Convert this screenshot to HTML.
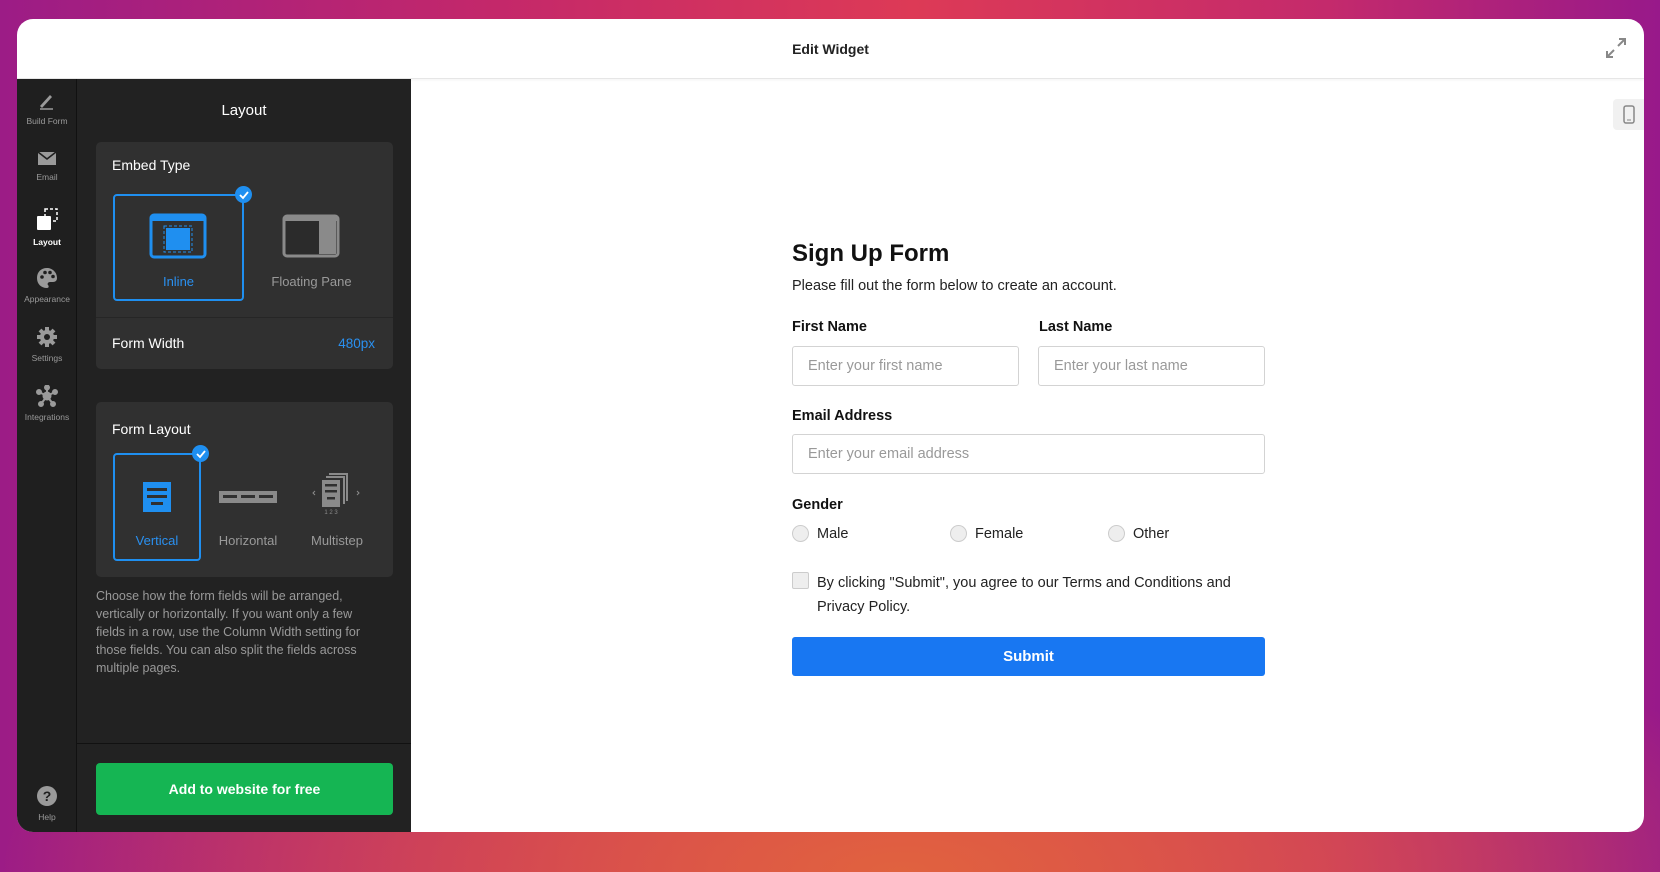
<!DOCTYPE html>
<html><head><meta charset="utf-8"><style>
*{box-sizing:border-box;margin:0;padding:0}
body{width:1660px;height:872px;overflow:hidden;font-family:"Liberation Sans",sans-serif;
background:radial-gradient(ellipse 900px 300px at 900px 872px,#e0623f 0%,rgba(224,98,63,0) 100%),linear-gradient(90deg,#9c1c86 0%,#c4286a 30%,#dd3a56 55%,#c42a6c 80%,#98198a 100%);position:relative}
.win{position:absolute;left:17px;top:19px;width:1627px;height:813px;background:#fff;border-radius:16px;overflow:hidden}
.hdr{position:absolute;left:0;top:0;width:100%;height:60px;border-bottom:1px solid #e6e6e6;box-shadow:0 1px 3px rgba(0,0,0,.05)}
.hdr .t{position:absolute;left:0;right:0;top:22px;text-align:center;font-size:14px;font-weight:bold;color:#222}
.rail{position:absolute;left:0;top:60px;width:60px;height:753px;background:#1f1f1f;border-right:1px solid #111}
.ri{position:absolute;left:0;width:60px;text-align:center;font-size:8.5px;color:#9a9a9a}
.ri svg{display:block;margin:0 auto 5px}
.panel{position:absolute;left:60px;top:60px;width:334px;height:753px;background:#222}
.card{position:absolute;left:19px;width:297px;background:#303030;border-radius:5px}
.ct{position:absolute;left:16px;font-size:14px;color:#fff}
.box{position:absolute}
.sel{border:2px solid #1f8ff0;border-radius:4px}
.lbl{position:absolute;text-align:center;font-size:13px;color:#999;white-space:nowrap}
.ic{position:absolute}
.chk{position:absolute;width:17px;height:17px;border-radius:50%;background:#1f8ff0}
.form{position:absolute;left:775px;top:0;color:#222}
.lab{position:absolute;font-size:14.5px;font-weight:bold;color:#111}
.inp{position:absolute;height:40px;border:1px solid #d3d3d3;border-radius:3px;font-size:14.5px;color:#999;padding:11px 15px}
.rad{position:absolute;width:17px;height:17px;border-radius:50%;background:#eee;border:1px solid #ccc}
.rl{position:absolute;font-size:14.5px;color:#222}
</style></head><body>
<div class="win">
<div class="hdr"><div class="t">Edit Widget</div>
<svg style="position:absolute;left:1588px;top:18px" width="22" height="22" viewBox="0 0 22 22" fill="none" stroke="#888" stroke-width="2"><path d="M13 9l7-7M14 2h6v6M9 13l-7 7M2 14v6h6"/></svg></div>
<div class="rail">
<div class="ri" style="top:12px"><svg width="20" height="20" viewBox="0 0 20 20"><path d="M3 15l10-11 2 2-10 11z" fill="#9a9a9a"/><path d="M3 18h13" stroke="#9a9a9a" stroke-width="1.5"/></svg>Build Form</div>
<div class="ri" style="top:71px"><svg width="20" height="17" viewBox="0 0 20 17"><rect x="1" y="2" width="18" height="13" fill="#9a9a9a"/><path d="M1 2l9 7 9-7" stroke="#1f1f1f" stroke-width="1.6" fill="none"/></svg>Email</div>
<div class="ri" style="top:129px;color:#fff;font-weight:bold"><svg width="26" height="24" viewBox="0 0 26 24"><rect x="11" y="1" width="12" height="12" fill="none" stroke="#fff" stroke-width="1.5" stroke-dasharray="3 2"/><rect x="3" y="8" width="14" height="14" rx="1" fill="#fff"/></svg>Layout</div>
<div class="ri" style="top:188px"><svg width="22" height="22" viewBox="0 0 22 22"><path d="M11 1C5 1 1 5 1 11s4 10 10 10c2 0 2-2 1-3s0-3 2-3h3c3 0 4-2 4-4C21 5 16 1 11 1z" fill="#9a9a9a"/><circle cx="6" cy="10" r="1.8" fill="#1f1f1f"/><circle cx="9" cy="5.5" r="1.8" fill="#1f1f1f"/><circle cx="14" cy="5.5" r="1.8" fill="#1f1f1f"/><circle cx="17" cy="9.5" r="1.8" fill="#1f1f1f"/></svg>Appearance</div>
<div class="ri" style="top:247px"><svg width="22" height="22" viewBox="0 0 22 22"><circle cx="11" cy="11" r="7" fill="#9a9a9a"/><g stroke="#9a9a9a" stroke-width="4"><path d="M11 1v20M1 11h20M4 4l14 14M18 4L4 18"/></g><circle cx="11" cy="11" r="3" fill="#1f1f1f"/></svg>Settings</div>
<div class="ri" style="top:306px"><svg width="22" height="22" viewBox="0 0 22 22" fill="#9a9a9a" stroke="#9a9a9a" stroke-width="2"><path d="M11 11L11 2M11 11L3 7M11 11L19 7M11 11L5 19M11 11L17 19"/><circle cx="11" cy="11" r="3.5"/><circle cx="11" cy="2.5" r="2"/><circle cx="3" cy="7" r="2"/><circle cx="19" cy="7" r="2"/><circle cx="5" cy="19" r="2"/><circle cx="17" cy="19" r="2"/></svg>Integrations</div>
<div class="ri" style="top:706px"><svg width="22" height="22" viewBox="0 0 22 22"><circle cx="11" cy="11" r="10" fill="#9a9a9a"/><text x="11" y="16" text-anchor="middle" font-size="14" font-weight="bold" fill="#1f1f1f" font-family="Liberation Sans">?</text></svg>Help</div>
</div>
<div class="panel">
<div style="position:absolute;left:0;right:0;top:23px;text-align:center;font-size:15px;color:#fff">Layout</div>
<div class="card" style="top:63px;height:227px">
<div class="ct" style="top:15px">Embed Type</div>
<div class="box sel" style="left:17px;top:52px;width:131px;height:107px"></div>
<div class="chk" style="left:139px;top:44px"><svg width="17" height="17"><path d="M5 9l3 3 5-6" stroke="#fff" stroke-width="1.8" fill="none"/></svg></div>
<svg class="ic" style="left:53px;top:71px" width="58" height="46" viewBox="0 0 58 46"><rect x="2" y="2" width="54" height="42" rx="3" fill="none" stroke="#1f8ff0" stroke-width="3"/><rect x="2" y="2" width="54" height="6" fill="#1f8ff0"/><rect x="17" y="15" width="24" height="22" fill="#1f8ff0"/><rect x="15" y="13" width="28" height="26" fill="none" stroke="#1f8ff0" stroke-dasharray="3 2"/></svg>
<div class="lbl" style="left:17px;width:131px;top:132px;color:#2a90f0">Inline</div>
<svg class="ic" style="left:186px;top:72px" width="58" height="44" viewBox="0 0 58 44"><rect x="2" y="2" width="54" height="40" rx="3" fill="#2b2b2b" stroke="#8a8a8a" stroke-width="3"/><rect x="2" y="2" width="54" height="5" fill="#8a8a8a"/><rect x="37" y="7" width="17" height="33" fill="#8a8a8a"/></svg>
<div class="lbl" style="left:150px;width:131px;top:132px">Floating Pane</div>
<div style="position:absolute;left:0;right:0;top:175px;border-top:1px solid #262626"></div>
<div class="ct" style="top:193px">Form Width</div>
<div style="position:absolute;right:18px;top:194px;font-size:13.5px;color:#2a90f0">480px</div>
</div>
<div class="card" style="top:323px;height:175px">
<div class="ct" style="top:19px">Form Layout</div>
<div class="box sel" style="left:17px;top:51px;width:88px;height:108px"></div>
<div class="chk" style="left:96px;top:43px"><svg width="17" height="17"><path d="M5 9l3 3 5-6" stroke="#fff" stroke-width="1.8" fill="none"/></svg></div>
<svg class="ic" style="left:47px;top:80px" width="28" height="30" viewBox="0 0 28 30"><rect width="28" height="30" fill="#1f8ff0"/><rect x="4" y="6" width="20" height="3" fill="#303030"/><rect x="4" y="13" width="20" height="3" fill="#303030"/><rect x="8" y="20" width="12" height="3" fill="#303030"/></svg>
<div class="lbl" style="left:17px;width:88px;top:131px;color:#2a90f0">Vertical</div>
<svg class="ic" style="left:123px;top:89px" width="58" height="12" viewBox="0 0 58 12"><rect width="58" height="12" fill="#8a8a8a"/><rect x="4" y="4" width="14" height="3" fill="#303030"/><rect x="22" y="4" width="14" height="3" fill="#303030"/><rect x="40" y="4" width="14" height="3" fill="#303030"/></svg>
<div class="lbl" style="left:107px;width:90px;top:131px">Horizontal</div>
<svg class="ic" style="left:215px;top:68px" width="52" height="44" viewBox="0 0 52 44"><path d="M18 4h18v27" fill="none" stroke="#8a8a8a" stroke-width="2"/><path d="M15 7h18v27" fill="none" stroke="#8a8a8a" stroke-width="2"/><rect x="11" y="10" width="18" height="27" fill="#8a8a8a"/><rect x="14" y="14" width="12" height="2.5" fill="#303030"/><rect x="14" y="20" width="12" height="2.5" fill="#303030"/><rect x="16" y="27" width="8" height="2.5" fill="#303030"/><path d="M4 21l-2 2 2 2M46 21l2 2-2 2" stroke="#8a8a8a" fill="none"/><text x="20" y="44" font-size="6" fill="#8a8a8a" text-anchor="middle" font-family="Liberation Sans">1 2 3</text></svg>
<div class="lbl" style="left:196px;width:90px;top:131px">Multistep</div>
</div>
<div style="position:absolute;left:19px;top:508px;width:282px;font-size:12.5px;line-height:18px;color:#999">Choose how the form fields will be arranged, vertically or horizontally. If you want only a few fields in a row, use the Column Width setting for those fields. You can also split the fields across multiple pages.</div>
<div style="position:absolute;left:0;right:0;top:664px;border-top:1px solid #111"></div>
<div style="position:absolute;left:19px;top:684px;width:297px;height:52px;background:#15b553;border-radius:4px;color:#fff;font-weight:bold;font-size:14px;text-align:center;line-height:52px">Add to website for free</div>
</div>
<div style="position:absolute;left:1596px;top:80px;width:34px;height:31px;background:#f1f1f1;border-radius:4px"><svg style="position:absolute;left:10px;top:6px" width="12" height="19" viewBox="0 0 12 19"><rect x="1" y="1" width="10" height="17" rx="2" fill="none" stroke="#888" stroke-width="1.5"/><path d="M4 15h4" stroke="#888"/></svg></div>
<div class="form">
<div style="position:absolute;left:0;top:221px;font-size:24px;font-weight:bold;color:#111;white-space:nowrap">Sign Up Form</div>
<div style="position:absolute;left:0;top:259px;font-size:14.5px;white-space:nowrap">Please fill out the form below to create an account.</div>
<div class="lab" style="left:0;top:300px;white-space:nowrap">First Name</div>
<div class="lab" style="left:247px;top:300px;white-space:nowrap">Last Name</div>
<div class="inp" style="left:0;top:327px;width:227px">Enter your first name</div>
<div class="inp" style="left:246px;top:327px;width:227px">Enter your last name</div>
<div class="lab" style="left:0;top:389px;white-space:nowrap">Email Address</div>
<div class="inp" style="left:0;top:415px;width:473px">Enter your email address</div>
<div class="lab" style="left:0;top:478px">Gender</div>
<div class="rad" style="left:0;top:506px"></div><div class="rl" style="left:25px;top:507px">Male</div>
<div class="rad" style="left:158px;top:506px"></div><div class="rl" style="left:183px;top:507px">Female</div>
<div class="rad" style="left:316px;top:506px"></div><div class="rl" style="left:341px;top:507px">Other</div>
<div style="position:absolute;left:0;top:553px;width:17px;height:17px;background:#eee;border:1px solid #ccc;border-radius:2px"></div>
<div style="position:absolute;left:25px;top:552px;width:440px;font-size:14.5px;line-height:24px">By clicking "Submit", you agree to our Terms and Conditions and Privacy Policy.</div>
<div style="position:absolute;left:0;top:618px;width:473px;height:39px;background:#1877f2;border-radius:3px;color:#fff;font-weight:bold;font-size:15px;text-align:center;line-height:39px">Submit</div>
</div>
</div>
</body></html>
